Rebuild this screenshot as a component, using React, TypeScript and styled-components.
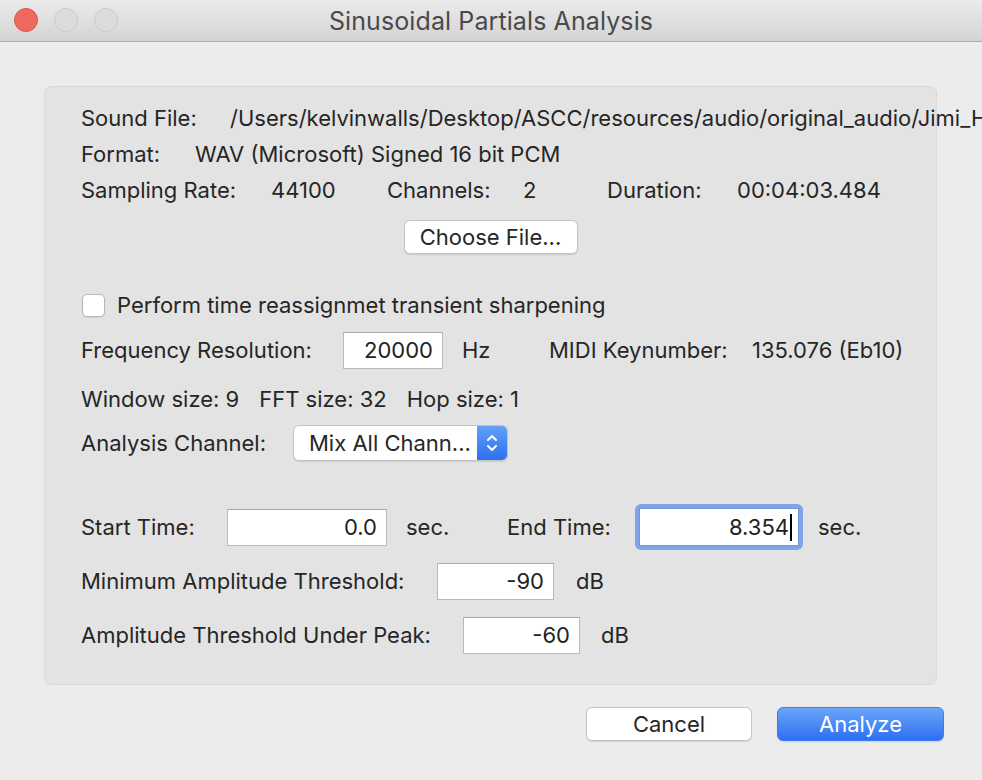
import React from "react";
import styled, { createGlobalStyle } from "styled-components";

const Global = createGlobalStyle`
  html, body { margin: 0; padding: 0; background: #ececec; }
  body { overflow: hidden; }
  * { box-sizing: border-box; }
`;

const FONT = `Inter, "Helvetica Neue", "Liberation Sans", Arial, sans-serif`;

const Window = styled.div`
  width: 982px;
  height: 780px;
  overflow: hidden;
  background: #ececec;
  display: flex;
  flex-direction: column;
  font-family: ${FONT};
  font-size: 22px;
  color: #262626;
`;

const TitleBar = styled.div`
  position: relative;
  height: 42px;
  flex: none;
  display: flex;
  align-items: center;
  justify-content: center;
  background: linear-gradient(#ebebeb, #d4d4d4);
  border-bottom: 1px solid #acacac;
`;

const Lights = styled.div`
  position: absolute;
  left: 14px;
  top: 8px;
  display: flex;
  gap: 16px;
`;

const Light = styled.div<{ $red?: boolean }>`
  width: 24px;
  height: 24px;
  border-radius: 50%;
  background: ${(p) => (p.$red ? "#ee6a5e" : "#dcdcdc")};
  border: 1px solid ${(p) => (p.$red ? "#d6554a" : "#c9c9c9")};
`;

const Title = styled.div`
  font-size: 25px;
  color: #4a4a4a;
  letter-spacing: 0.1px;
`;

const Body = styled.div`
  flex: 1;
  display: flex;
  flex-direction: column;
  padding: 44px 0 0 44px;
`;

const Panel = styled.div`
  width: 893px;
  background: #e3e3e3;
  border: 1px solid #d9d9d9;
  border-radius: 7px;
  padding: 13px 0 31px 36px;
  display: flex;
  flex-direction: column;
`;

const Row = styled.div<{ $top?: number }>`
  display: flex;
  align-items: center;
  height: 36px;
  margin-top: ${(p) => p.$top ?? 0}px;
  white-space: nowrap;
`;

const Cell = styled.span<{ $w?: number }>`
  flex: none;
  ${(p) => (p.$w ? `width: ${p.$w}px;` : "")}
`;

const Unit = styled.span<{ $ml: number; $w?: number }>`
  flex: none;
  margin-left: ${(p) => p.$ml}px;
  ${(p) => (p.$w ? `width: ${p.$w}px;` : "")}
`;

const CenterRow = styled.div`
  display: flex;
  justify-content: center;
  margin-top: 12px;
  margin-left: -36px;
`;

const PushButton = styled.button<{ $w: number; $primary?: boolean }>`
  width: ${(p) => p.$w}px;
  height: 34px;
  border-radius: 6px;
  font-family: ${FONT};
  font-size: 22px;
  padding: 0;
  color: ${(p) => (p.$primary ? "#ffffff" : "#262626")};
  border: 1px solid ${(p) => (p.$primary ? "#3b7ef2" : "#c4c4c4")};
  background: ${(p) =>
    p.$primary ? "linear-gradient(#6aa6f8, #2d6ff2)" : "#ffffff"};
  box-shadow: 0 1px 1px rgba(0, 0, 0, 0.12);
`;

const CheckBox = styled.span`
  width: 23px;
  height: 23px;
  margin-left: 1px;
  border: 1px solid #b7b7b7;
  border-radius: 5px;
  background: #fff;
  box-shadow: 0 1px 1px rgba(0, 0, 0, 0.08);
  flex: none;
`;

const CheckLabel = styled.span`
  margin-left: 12px;
`;

const Field = styled.div<{ $w: number }>`
  width: ${(p) => p.$w}px;
  height: 37px;
  flex: none;
  background: #fff;
  border: 1px solid #b9b9b9;
  border-top-color: #a9a9a9;
  display: flex;
  align-items: center;
  justify-content: flex-end;
  padding-right: 9px;
  color: #222;
`;

const FocusRing = styled.div`
  flex: none;
  padding: 4px;
  margin: 0 -5px;
  border-radius: 6px;
  background: #7fa5e6;
`;

const FocusField = styled(Field)`
  border: 1px solid #6f98de;
  height: 38px;
  padding-right: 6px;
`;

const Caret = styled.span`
  width: 2px;
  height: 27px;
  background: #000;
  margin-left: 1px;
`;

const Stats = styled.div`
  display: flex;
  gap: 20px;
`;

const Popup = styled.div`
  width: 215px;
  height: 36px;
  flex: none;
  display: flex;
  border-radius: 6px;
  border: 1px solid #c3c3c3;
  background: #fff;
  overflow: hidden;
  box-shadow: 0 1px 1px rgba(0, 0, 0, 0.1);
`;

const PopupText = styled.span`
  flex: 1;
  padding-left: 15px;
  display: flex;
  align-items: center;
`;

const PopupArrows = styled.span`
  width: 30px;
  flex: none;
  display: flex;
  align-items: center;
  justify-content: center;
  background: linear-gradient(#62a0f8, #2e6ff0);
`;

const Footer = styled.div`
  display: flex;
  justify-content: flex-end;
  gap: 25px;
  padding: 22px 38px 0 0;
`;

function Arrows() {
  return (
    <svg width="14" height="22" viewBox="0 0 14 22">
      <path d="M3 8 L7 4 L11 8" fill="none" stroke="#fff" strokeWidth="2" strokeLinecap="round" strokeLinejoin="round" />
      <path d="M3 14 L7 18 L11 14" fill="none" stroke="#fff" strokeWidth="2" strokeLinecap="round" strokeLinejoin="round" />
    </svg>
  );
}

export default function App() {
  return (
    <Window>
      <Global />
      <TitleBar>
        <Lights>
          <Light $red />
          <Light />
          <Light />
        </Lights>
        <Title>Sinusoidal Partials Analysis</Title>
      </TitleBar>
      <Body>
        <Panel>
          <Row>
            <Cell $w={149}>Sound File:</Cell>
            <Cell>/Users/kelvinwalls/Desktop/ASCC/resources/audio/original_audio/Jimi_Hendrix.wav</Cell>
          </Row>
          <Row>
            <Cell $w={114}>Format:</Cell>
            <Cell>WAV (Microsoft) Signed 16 bit PCM</Cell>
          </Row>
          <Row>
            <Cell $w={190}>Sampling Rate:</Cell>
            <Cell $w={116}>44100</Cell>
            <Cell $w={136}>Channels:</Cell>
            <Cell $w={84}>2</Cell>
            <Cell $w={130}>Duration:</Cell>
            <Cell>00:04:03.484</Cell>
          </Row>
          <CenterRow>
            <PushButton $w={174}>Choose File...</PushButton>
          </CenterRow>
          <Row $top={33}>
            <CheckBox />
            <CheckLabel>Perform time reassignmet transient sharpening</CheckLabel>
          </Row>
          <Row $top={9}>
            <Cell $w={262}>Frequency Resolution:</Cell>
            <Field $w={100}>20000</Field>
            <Unit $ml={19} $w={87}>Hz</Unit>
            <Cell $w={203}>MIDI Keynumber:</Cell>
            <Cell>135.076 (Eb10)</Cell>
          </Row>
          <Row $top={13}>
            <Stats>
              <span>Window size: 9</span>
              <span>FFT size: 32</span>
              <span>Hop size: 1</span>
            </Stats>
          </Row>
          <Row $top={8}>
            <Cell $w={212}>Analysis Channel:</Cell>
            <Popup>
              <PopupText>Mix All Chann...</PopupText>
              <PopupArrows>
                <Arrows />
              </PopupArrows>
            </Popup>
          </Row>
          <Row $top={48}>
            <Cell $w={146}>Start Time:</Cell>
            <Field $w={160}>0.0</Field>
            <Unit $ml={19} $w={101}>sec.</Unit>
            <Cell $w={133}>End Time:</Cell>
            <FocusRing>
              <FocusField $w={160}>
                8.354
                <Caret />
              </FocusField>
            </FocusRing>
            <Unit $ml={20}>sec.</Unit>
          </Row>
          <Row $top={18}>
            <Cell $w={356}>Minimum Amplitude Threshold:</Cell>
            <Field $w={117}>-90</Field>
            <Unit $ml={22}>dB</Unit>
          </Row>
          <Row $top={18}>
            <Cell $w={382}>Amplitude Threshold Under Peak:</Cell>
            <Field $w={117}>-60</Field>
            <Unit $ml={21}>dB</Unit>
          </Row>
        </Panel>
        <Footer>
          <PushButton $w={166}>Cancel</PushButton>
          <PushButton $w={167} $primary>
            Analyze
          </PushButton>
        </Footer>
      </Body>
    </Window>
  );
}
